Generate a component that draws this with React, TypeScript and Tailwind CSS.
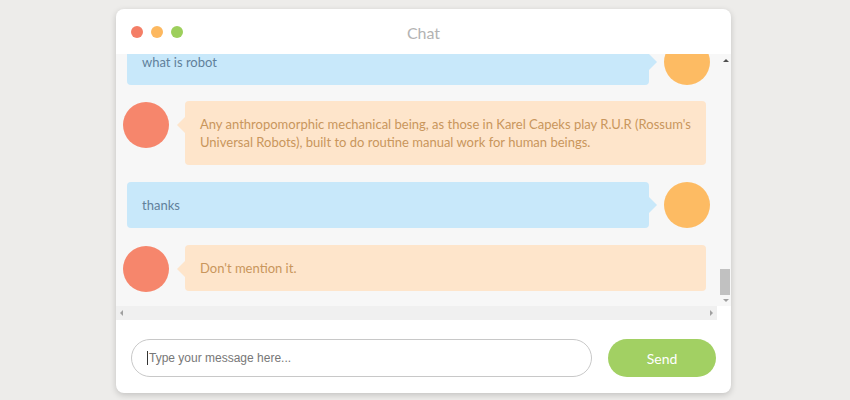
import React from "react";

const font = { fontFamily: "Lato, 'Open Sans', sans-serif" };

function LeftMsg({ children }: { children: React.ReactNode }) {
  return (
    <div className="flex items-start">
      <div className="w-[46px] h-[46px] rounded-full bg-[#f6866c] shrink-0 mt-[1px]" />
      <div className="relative ml-[16px] mr-[4px] flex-1 bg-[#fee5cb] rounded-[4px] px-[15px] py-[14px] text-[13px] leading-[18px] text-[#c9965c]">
        <div className="absolute left-[-8px] top-[16px] w-0 h-0 border-y-[8px] border-y-transparent border-r-[8px] border-r-[#fee5cb]" />
        {children}
      </div>
    </div>
  );
}

function RightMsg({ children, className = "" }: { children: React.ReactNode; className?: string }) {
  return (
    <div className={"flex items-start " + className}>
      <div className="relative ml-[4px] flex-1 bg-[#c8e8fa] rounded-[4px] px-[15px] py-[14px] text-[13px] leading-[18px] text-[#61809a]">
        <div className="absolute right-[-8px] top-[15px] w-0 h-0 border-y-[8px] border-y-transparent border-l-[8px] border-l-[#c8e8fa]" />
        {children}
      </div>
      <div className="w-[46px] h-[46px] rounded-full bg-[#fdbb63] shrink-0 ml-[15px]" />
    </div>
  );
}

export default function App() {
  return (
    <div className="w-[850px] h-[400px] bg-[#edecea] pt-[9px] pl-[116px]" style={font}>
      <div className="w-[615px] h-[384px] bg-white rounded-[8px] shadow-[0_2px_6px_rgba(0,0,0,0.18)] flex flex-col overflow-hidden">
        <div className="h-[45px] shrink-0 relative flex items-center pl-[15px] gap-[8px]">
          <div className="w-[12px] h-[12px] rounded-full bg-[#f47e66]" />
          <div className="w-[12px] h-[12px] rounded-full bg-[#fdb85f]" />
          <div className="w-[12px] h-[12px] rounded-full bg-[#9dcf5c]" />
          <div className="absolute inset-0 flex items-center justify-center text-[16px] text-[#b3b3b3] pt-[2px]">Chat</div>
        </div>
        <div className="h-[266px] shrink-0 flex flex-col">
          <div className="flex h-[252px]">
            <div className="w-[601px] h-full overflow-hidden bg-[#f7f7f7] px-[7px]">
              <div className="flex flex-col gap-[16px] mt-[-15px]">
                <RightMsg>what is robot</RightMsg>
                <LeftMsg>
                  Any anthropomorphic mechanical being, as those in Karel Capeks play R.U.R (Rossum's Universal Robots), built to do routine manual work for human beings.
                </LeftMsg>
                <RightMsg className="mt-[1px]">thanks</RightMsg>
                <div className="mt-[1px]">
                  <LeftMsg>Don't mention it.</LeftMsg>
                </div>
              </div>
            </div>
            <div className="w-[14px] h-full bg-[#f7f7f7] relative">
              <div className="absolute left-[6px] top-[5px] w-0 h-0 border-x-[3px] border-x-transparent border-b-[3px] border-b-[#505050]" />
              <div className="absolute left-[3px] top-[215px] w-[10px] h-[26px] bg-[#c1c1c1]" />
              <div className="absolute left-[6px] top-[245px] w-0 h-0 border-x-[3px] border-x-transparent border-t-[3px] border-t-[#a0a0a0]" />
            </div>
          </div>
          <div className="flex h-[14px]">
            <div className="w-[601px] h-full bg-[#f0f0f0] relative">
              <div className="absolute left-[4px] top-[4px] w-0 h-0 border-y-[3px] border-y-transparent border-r-[3px] border-r-[#a0a0a0]" />
              <div className="absolute right-[4px] top-[4px] w-0 h-0 border-y-[3px] border-y-transparent border-l-[3px] border-l-[#a0a0a0]" />
            </div>
            <div className="w-[14px] h-full bg-white" />
          </div>
        </div>
        <div className="flex-1 flex items-start pt-[19px] px-[15px] gap-[16px]">
          <div className="flex-1 h-[38px] rounded-full border border-[#c8c8c8] flex items-center pl-[15px] text-[12px] text-[#777]" style={{ fontFamily: "'Liberation Sans', Arial, sans-serif" }}>
            <span className="w-px h-[14px] bg-[#333] mr-[1px]" />
            Type your message here...
          </div>
          <div className="w-[108px] h-[38px] rounded-full bg-[#a2d063] text-white text-[14px] flex items-center justify-center">Send</div>
        </div>
      </div>
    </div>
  );
}
